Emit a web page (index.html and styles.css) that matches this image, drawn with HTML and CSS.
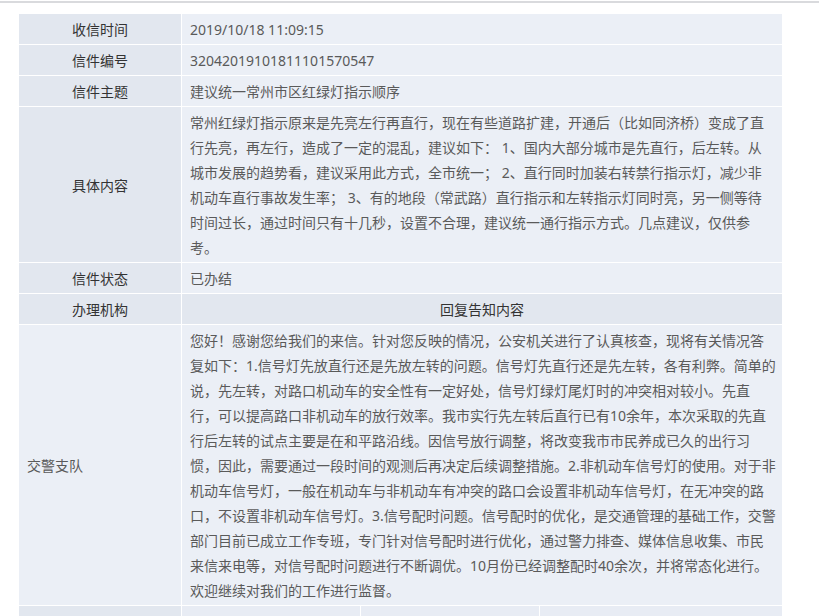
FILE: index.html
```html
<!DOCTYPE html>
<html lang="zh-CN">
<head>
<meta charset="utf-8">
<title>信件详情</title>
<link rel="stylesheet" href="styles.css">
</head>
<body>
<div class="topbar"></div>
<div class="sheet">
  <div class="lab">收信时间</div>
  <div class="val">2019/10/18 11:09:15</div>

  <div class="lab">信件编号</div>
  <div class="val">32042019101811101570547</div>

  <div class="lab">信件主题</div>
  <div class="val">建议统一常州市区红绿灯指示顺序</div>

  <div class="lab">具体内容</div>
  <div class="val multi">常州红绿灯指示原来是先亮左行再直行，现在有些道路扩建，开通后（比如同济桥）变成了直<br>行先亮，再左行，造成了一定的混乱，建议如下： 1、国内大部分城市是先直行，后左转。从<br>城市发展的趋势看，建议采用此方式，全市统一； 2、直行同时加装右转禁行指示灯，减少非<br>机动车直行事故发生率； 3、有的地段（常武路）直行指示和左转指示灯同时亮，另一侧等待<br>时间过长，通过时间只有十几秒，设置不合理，建议统一通行指示方式。几点建议，仅供参<br>考。</div>

  <div class="lab">信件状态</div>
  <div class="val">已办结</div>

  <div class="lab">办理机构</div>
  <div class="val head">回复告知内容</div>

  <div class="lab org">交警支队</div>
  <div class="val multi">您好！感谢您给我们的来信。针对您反映的情况，公安机关进行了认真核查，现将有关情况答<br>复如下：1.信号灯先放直行还是先放左转的问题。信号灯先直行还是先左转，各有利弊。简单的<br>说，先左转，对路口机动车的安全性有一定好处，信号灯绿灯尾灯时的冲突相对较小。先直<br>行，可以提高路口非机动车的放行效率。我市实行先左转后直行已有10余年，本次采取的先直<br>行后左转的试点主要是在和平路沿线。因信号放行调整，将改变我市市民养成已久的出行习<br>惯，因此，需要通过一段时间的观测后再决定后续调整措施。2.非机动车信号灯的使用。对于非<br>机动车信号灯，一般在机动车与非机动车有冲突的路口会设置非机动车信号灯，在无冲突的路<br>口，不设置非机动车信号灯。3.信号配时问题。信号配时的优化，是交通管理的基础工作，交警<br>部门目前已成立工作专班，专门针对信号配时进行优化，通过警力排查、媒体信息收集、市民<br>来信来电等，对信号配时问题进行不断调优。10月份已经调整配时40余次，并将常态化进行。<br>欢迎继续对我们的工作进行监督。</div>

  <div class="lab"></div>
  <div class="cell"></div>
  <div class="cell"></div>
  <div class="cell"></div>
</div>
</body>
</html>
```

FILE: styles.css
```css
html, body {
  margin: 0;
  padding: 0;
  background: #ffffff;
}

body {
  font-family: "Noto Sans", "Noto Sans CJK SC", sans-serif;
  font-size: 14px;
  overflow: hidden;
}

.topbar {
  margin-top: 1px;
  height: 2px;
  background: #d9dadd;
}

.sheet {
  margin: 11px 0 0 19px;
  width: 763px;
  display: grid;
  grid-template-columns: 162px 178px 178px 242px;
  gap: 1px;
  background: #ffffff;
}

.lab {
  min-height: 30px;
  background: #e2e7ef;
  color: #333333;
  display: flex;
  align-items: center;
  justify-content: center;
}

.lab.org {
  background: #ebeff6;
  color: #5a5a5a;
  justify-content: flex-start;
  padding-left: 8px;
}

.val {
  grid-column: 2 / 5;
  min-height: 30px;
  background: #ebeff6;
  color: #5a5a5a;
  padding: 0 8px;
  display: flex;
  align-items: center;
  white-space: nowrap;
}

.val.multi {
  display: block;
  line-height: 25px;
  padding: 3px 8px 2px 8px;
}

.val.head {
  background: #e2e7ef;
  color: #333333;
  justify-content: center;
}

.cell {
  min-height: 30px;
  background: #e8ecf4;
}
```
